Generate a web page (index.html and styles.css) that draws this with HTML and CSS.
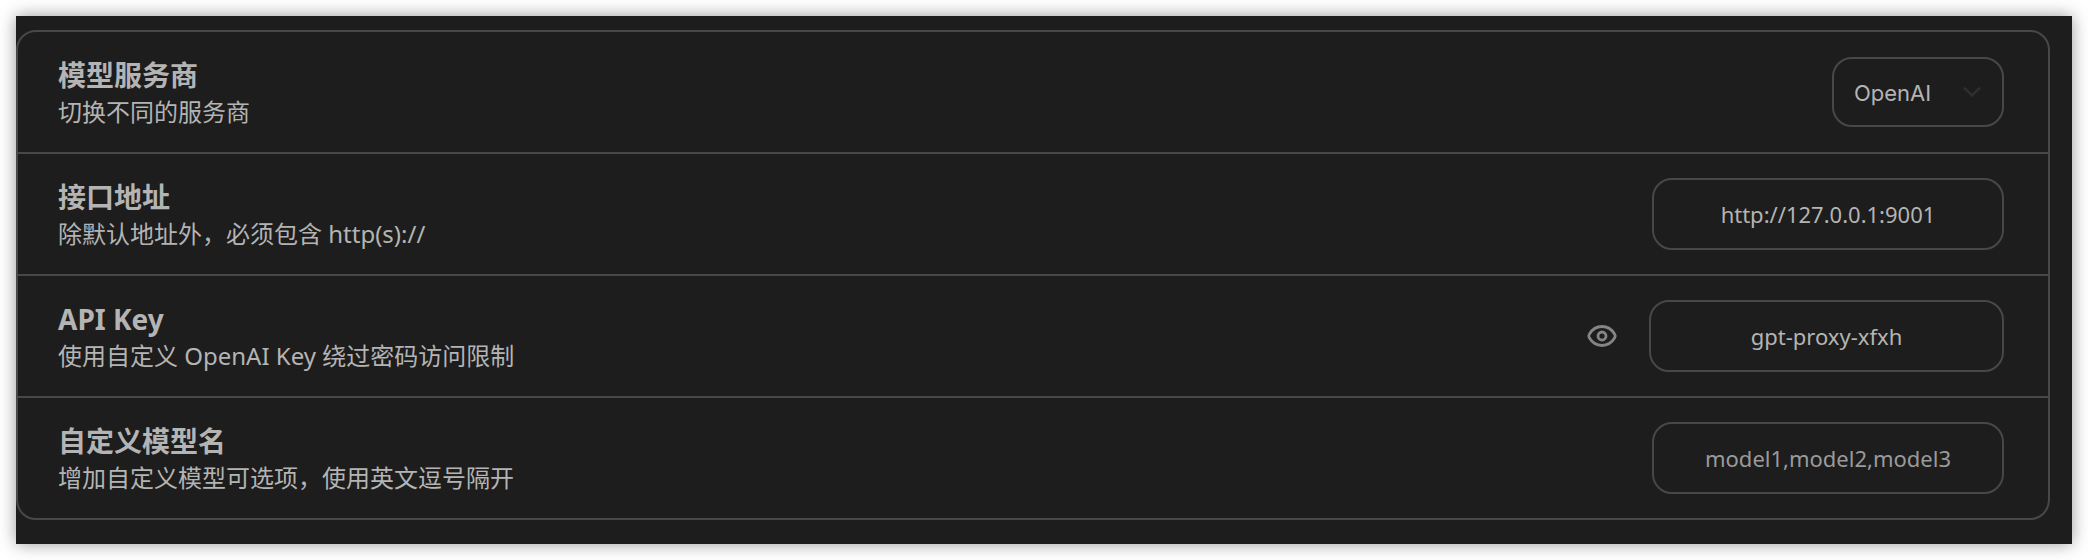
FILE: index.html
```html
<!DOCTYPE html>
<html lang="zh-CN">
<head>
<meta charset="utf-8">
<title>模型服务商</title>
<link rel="stylesheet" href="styles.css">
</head>
<body>
<main class="panel">
  <ul class="list">
    <li class="row">
      <div class="text">
        <label class="title" for="provider">模型服务商</label>
        <p class="subtitle">切换不同的服务商</p>
      </div>
      <div class="select-wrap">
        <select class="select" id="provider"><option>OpenAI</option></select>
        <svg class="chevron" viewBox="0 0 18 12" aria-hidden="true"><path d="M1 1.500 9 9.500 17 1.500"/></svg>
      </div>
    </li>
    <li class="row">
      <div class="text">
        <label class="title" for="endpoint">接口地址</label>
        <p class="subtitle">除默认地址外，必须包含 http(s)://</p>
      </div>
      <input class="field" id="endpoint" type="text" value="http://127.0.0.1:9001">
    </li>
    <li class="row">
      <div class="text">
        <label class="title" for="key">API Key</label>
        <p class="subtitle">使用自定义 OpenAI Key 绕过密码访问限制</p>
      </div>
      <div class="secret">
        <button class="eye" type="button" aria-label="显示或隐藏">
          <svg class="eye-icon" viewBox="0 0 32 32" aria-hidden="true"><path d="M16 6.500C22 6.500 26.500 10.500 28.700 14.200Q29.800 16 28.700 17.800C26.500 21.500 22 25.500 16 25.500S5.500 21.500 3.300 17.800Q2.200 16 3.300 14.200C5.500 10.500 10 6.500 16 6.500Z"/><circle cx="16" cy="16" r="4"/></svg>
        </button>
        <input class="field field-wide" id="key" type="text" value="gpt-proxy-xfxh">
      </div>
    </li>
    <li class="row">
      <div class="text">
        <label class="title" for="models">自定义模型名</label>
        <p class="subtitle">增加自定义模型可选项，使用英文逗号隔开</p>
      </div>
      <input class="field" id="models" type="text" placeholder="model1,model2,model3">
    </li>
  </ul>
</main>
</body>
</html>
```
FILE: styles.css
```css
* {
  box-sizing: border-box;
}

body {
  margin: 0;
  padding: 16px;
  background: #fff;
  color: #b4b4b4;
  font-family: "Noto Sans", "Noto Sans CJK SC", sans-serif;
}

.panel {
  padding: 14px 22px 24px 0;
  background: #1d1d1d;
  box-shadow: 0 0 16px rgba(0, 0, 0, 0.4);
}

.list {
  margin: 0;
  padding: 0;
  list-style: none;
  border: 2px solid #484848;
  border-radius: 20px;
}

.row {
  display: flex;
  align-items: center;
  justify-content: space-between;
  min-height: 122px;
  padding: 0 44px 0 40px;
  border-bottom: 2px solid #484848;
}

.row:last-child {
  min-height: 120px;
  border-bottom: 0;
}

.text {
  padding-top: 2px;
}

.title {
  display: block;
  font-size: 28px;
  font-weight: 700;
  line-height: 38px;
}

.subtitle {
  margin: 0;
  font-size: 24px;
  line-height: 36px;
}

.select-wrap {
  display: grid;
  align-items: center;
}

.select,
.chevron {
  grid-area: 1 / 1;
}

.select {
  width: 172px;
  height: 70px;
  padding: 2px 20px 0;
  appearance: none;
  border: 2px solid #484848;
  border-radius: 20px;
  background: transparent;
  color: #b4b4b4;
  font: 22px Inter, sans-serif;
}

.chevron {
  justify-self: end;
  width: 18px;
  height: 12px;
  margin-right: 23px;
  fill: none;
  stroke: #303030;
  stroke-width: 2.4;
  pointer-events: none;
}

.field {
  width: 352px;
  height: 72px;
  padding: 0 20px;
  border: 2px solid #484848;
  border-radius: 20px;
  background: transparent;
  color: #b4b4b4;
  font: 22px "Noto Sans", sans-serif;
  text-align: center;
}

.field-wide {
  width: 355px;
}

.field::placeholder {
  color: #9a9a9a;
}

.secret {
  display: flex;
  align-items: center;
  gap: 31px;
}

.eye {
  display: flex;
  padding: 0;
  border: 0;
  background: transparent;
}

.eye-icon {
  width: 32px;
  height: 32px;
  fill: none;
  stroke: #858585;
  stroke-width: 2.8;
}
```
